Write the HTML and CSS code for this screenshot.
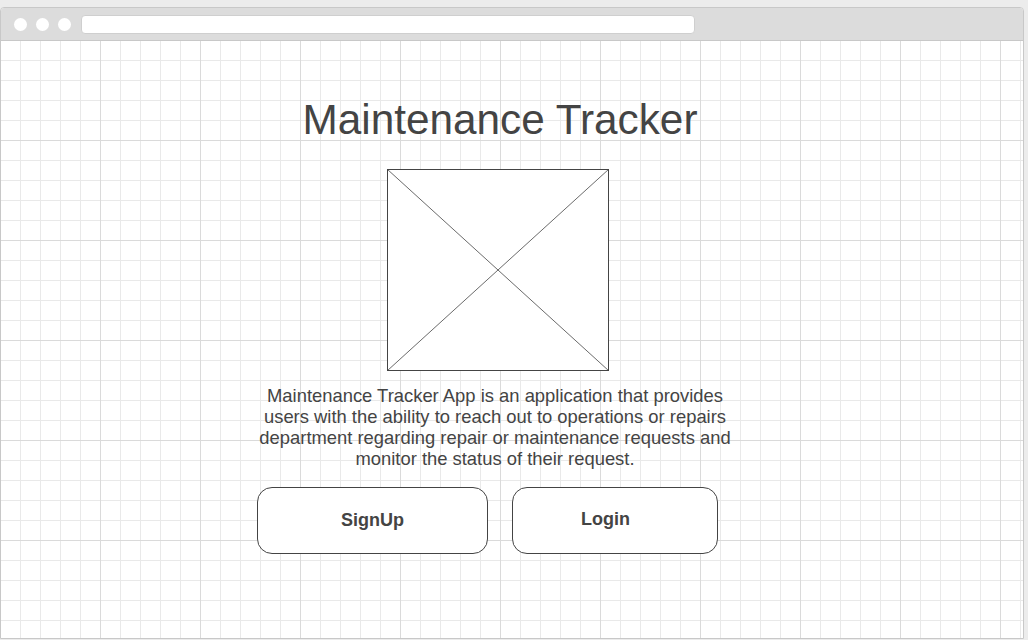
FILE: index.html
```html
<!DOCTYPE html>
<html lang="en">
<head>
<meta charset="utf-8">
<title>Maintenance Tracker</title>
<link rel="stylesheet" href="styles.css">
</head>
<body>
<div class="window">
  <div class="titlebar">
    <span class="dot"></span><span class="dot"></span><span class="dot"></span>
    <div class="address"></div>
  </div>
  <div class="content">
    <div class="stage">
      <h1 class="title">Maintenance Tracker</h1>
      <div class="placeholder">
        <svg width="222" height="202" viewBox="0 0 222 202">
          <line x1="0" y1="0" x2="222" y2="202" stroke="#444" stroke-width="0.8"/>
          <line x1="222" y1="0" x2="0" y2="202" stroke="#444" stroke-width="0.8"/>
        </svg>
      </div>
      <p class="desc">Maintenance Tracker App is an application that provides users with the ability to reach out to operations or repairs department regarding repair or maintenance requests and monitor the status of their request.</p>
      <div class="actions">
        <div class="btn btn-signup">SignUp</div>
        <div class="btn btn-login">Login</div>
      </div>
    </div>
  </div>
</div>
</body>
</html>
```

FILE: styles.css
```css
html, body {
  margin: 0;
  padding: 0;
}
body {
  background: #ececec;
  padding-top: 7px;
  height: 640px;
  box-sizing: border-box;
  overflow: hidden;
  font-family: "Liberation Sans", Arial, sans-serif;
  color: #444;
}
.window {
  width: 1024px;
  height: 632px;
  box-sizing: border-box;
  border: 1px solid #c8c8c8;
  border-radius: 4px 4px 0 0;
  background: #fff;
  display: flex;
  flex-direction: column;
  overflow: hidden;
}
.titlebar {
  height: 32px;
  flex: none;
  background: #dcdcdc;
  border-bottom: 1px solid #c8c8c8;
  display: flex;
  align-items: center;
  padding-left: 13px;
  gap: 9px;
}
.dot {
  width: 13px;
  height: 13px;
  border-radius: 50%;
  background: #fff;
  flex: none;
}
.address {
  margin-left: 1px;
  width: 614px;
  height: 19px;
  background: #fff;
  border: 1px solid #cfcfcf;
  border-radius: 4px;
  box-sizing: border-box;
  margin-top: 1px;
}
.content {
  flex: 1;
  background-color: #fff;
  background-image:
    linear-gradient(to right, #dadada 1px, transparent 1px),
    linear-gradient(to bottom, #dadada 1px, transparent 1px),
    linear-gradient(to right, #e9e9e9 1px, transparent 1px),
    linear-gradient(to bottom, #e9e9e9 1px, transparent 1px);
  background-size: 100px 100px, 100px 100px, 20px 20px, 20px 20px;
  background-position: 99px 0, 0 99px, 19px 0, 0 19px;
}
.stage {
  width: 482px;
  margin-left: 256px;
  display: flex;
  flex-direction: column;
  align-items: center;
}
.title {
  margin: 55px 0 0 0;
  font-weight: normal;
  font-size: 42.3px;
  line-height: 48px;
  color: #444;
  transform: translateX(2px);
}
.placeholder {
  margin-top: 25px;
  width: 222px;
  height: 202px;
  box-sizing: border-box;
  border: 1px solid #444;
  background: #fff;
  position: relative;
  overflow: hidden;
}
.placeholder svg {
  position: absolute;
  left: -1px;
  top: -1px;
  display: block;
}
.desc {
  margin: 14px 0 0 0;
  width: 480px;
  font-size: 18.4px;
  line-height: 21px;
  text-align: center;
  color: #444;
  transform: translateX(-3px);
}
.actions {
  align-self: stretch;
  display: flex;
  gap: 24px;
  margin-top: 18px;
}
.btn {
  height: 67px;
  box-sizing: border-box;
  border: 1px solid #444;
  border-radius: 15px;
  background: #fff;
  display: flex;
  align-items: center;
  justify-content: center;
  font-weight: bold;
  font-size: 18px;
  color: #444;
}
.btn-signup {
  width: 231px;
}
.btn-login {
  width: 206px;
  padding-bottom: 3px;
  padding-right: 19px;
}
```
